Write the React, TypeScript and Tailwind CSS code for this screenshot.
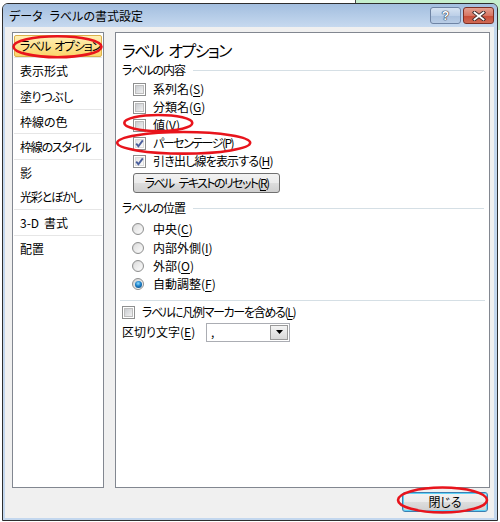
import React from "react";

const U = ({ c }: { c: string }) => (
  <span className="underline decoration-[1px] underline-offset-[2px]">{c}</span>
);

const Sp = () => <span className="inline-block w-[5px]" />;

function Check({ checked = false }: { checked?: boolean }) {
  return (
    <span className="relative flex h-[13px] w-[13px] shrink-0 items-center justify-center border border-[#8e8f8f] bg-white">
      {checked ? (
        <span className="h-[9px] w-[9px] border border-[#dcdcdc] bg-gradient-to-br from-[#e6e6e6] to-[#fbfbfb]" />
      ) : (
        <span className="h-[9px] w-[9px] border border-[#bdbdbd] bg-gradient-to-br from-[#c9ccd0] to-[#f1f1f1]" />
      )}
      {checked && (
        <svg className="absolute left-0 top-0" width="11" height="11" viewBox="0 0 11 11">
          <path d="M2.2 5.6 L4.4 8.2 L8.8 2.4" fill="none" stroke="#4a5e9c" strokeWidth="1.9" />
        </svg>
      )}
    </span>
  );
}

function Radio({ on = false }: { on?: boolean }) {
  return (
    <span className="flex h-[12px] w-[12px] shrink-0 items-center justify-center rounded-full border border-[#8e8f8f] bg-gradient-to-br from-[#d2d2d2] to-[#f9f9f9]">
      {on ? (
        <span className="h-[7px] w-[7px] rounded-full bg-[radial-gradient(circle_at_45%_35%,#8fdcff_0%,#1a7fc8_45%,#0b3d6e_100%)]" />
      ) : (
        <span className="h-[8px] w-[8px] rounded-full bg-gradient-to-br from-[#dedede] to-[#fafafa]" />
      )}
    </span>
  );
}

function Group({ label }: { label: string }) {
  return (
    <div className="flex h-[18px] items-center">
      <span className="whitespace-nowrap tracking-[-1.1px]">{label}</span>
      <span className="ml-[8px] mr-[5px] h-px flex-1 bg-[#d5dfe5]" />
    </div>
  );
}

const navItems: { key: string; label: React.ReactNode; h: string; sep: boolean; tr: string; selected?: boolean }[] = [
  { key: "a", label: <>ラベル<Sp />オプション</>, h: "h-[25px]", sep: true, tr: "tracking-[-1.2px]", selected: true },
  { key: "b", label: "表示形式", h: "h-[26px]", sep: true, tr: "tracking-normal" },
  { key: "c", label: "塗りつぶし", h: "h-[26px]", sep: true, tr: "tracking-[-0.4px]" },
  { key: "d", label: "枠線の色", h: "h-[24px]", sep: true, tr: "tracking-normal" },
  { key: "e", label: "枠線のスタイル", h: "h-[26px]", sep: true, tr: "tracking-[-1.2px]" },
  { key: "f", label: "影", h: "h-[25px]", sep: false, tr: "tracking-normal" },
  { key: "g", label: "光彩とぼかし", h: "h-[25px]", sep: true, tr: "tracking-[-1.2px]" },
  { key: "h", label: <>3-D<Sp />書式</>, h: "h-[26px]", sep: true, tr: "tracking-normal" },
  { key: "i", label: "配置", h: "h-[25px]", sep: false, tr: "tracking-normal" },
];

export default function App() {
  return (
    <div className="relative h-[522px] w-[500px] overflow-hidden bg-white font-['Noto_Sans_CJK_JP','Noto_Sans',sans-serif] text-[12px] leading-none text-black [font-feature-settings:'palt']">
      {/* background behind window */}
      <div className="absolute right-0 top-0 h-[30px] w-[145px] border-l border-[#4a4a4a] bg-[#c6efce]" />

      {/* window */}
      <div className="relative ml-[2px] mt-[3px] flex h-[518px] w-[496px] flex-col rounded-t-[6px] border border-[#2e2e2e] bg-[#c3d7ee]">
        {/* title bar */}
        <div className="flex h-[23px] items-start rounded-t-[5px] bg-gradient-to-b from-[#a3bedf] to-[#c6d9ef]">
          <div className="flex h-[23px] flex-1 items-center whitespace-nowrap pl-[6px]">
            データ<span className="inline-block w-[7px]" />ラベルの書式設定
          </div>
          <div className="mr-[3px] mt-[3px] flex gap-[2px]">
            <div className="flex h-[17px] w-[31px] items-center justify-center rounded-[3px] border border-[#6f84a4] bg-[linear-gradient(#d6e3f2_0%,#bdd0e8_50%,#a9c0dd_51%,#b9cde6_100%)] font-['Liberation_Sans',sans-serif] text-[12px] font-bold text-white [text-shadow:0_0_1px_#1e2a40,0_0_1px_#1e2a40,0_0_1px_#1e2a40]">
              ?
            </div>
            <div className="flex h-[17px] w-[31px] items-center justify-center rounded-[3px] border border-[#7c2f24] bg-[linear-gradient(#e4a091_0%,#d77664_50%,#c74a35_51%,#cf6a55_100%)]">
              <svg width="14" height="10" viewBox="0 0 14 10">
                <path d="M2.5 1.5 L11.5 8.5 M11.5 1.5 L2.5 8.5" stroke="#3a2a2a" strokeWidth="3.6" strokeLinecap="square" />
                <path d="M2.5 1.5 L11.5 8.5 M11.5 1.5 L2.5 8.5" stroke="#ffffff" strokeWidth="1.8" strokeLinecap="square" />
              </svg>
            </div>
          </div>
        </div>

        {/* client area */}
        <div className="ml-[2px] mr-[3px] flex h-[491px] w-[489px] flex-col bg-[#f0f0f0]">
          <div className="mt-[5px] ml-[7px] flex h-[456px] gap-[11px]">
            {/* left nav */}
            <div className="flex h-[456px] w-[92px] flex-col border border-[#828790] bg-white">
              {navItems.map((it) => (
                <div key={it.key} className={`flex flex-col ${it.h}`}>
                  {it.selected ? (
                    <div className="flex flex-1 flex-col pt-[2px]">
                      <div className={`mx-[1px] flex h-[22px] items-center whitespace-nowrap rounded-[2px] border border-[#dcb04c] bg-gradient-to-b from-[#fff0b4] to-[#fbd56a] pl-[5px] ${it.tr}`}>
                        {it.label}
                      </div>
                    </div>
                  ) : (
                    <div className={`flex flex-1 items-center whitespace-nowrap pl-[7px] ${it.tr}`}>{it.label}</div>
                  )}
                  {it.sep && <div className="mx-[1px] h-px bg-[#e6e6e6]" />}
                </div>
              ))}
            </div>

            {/* right panel */}
            <div className="flex h-[456px] w-[375px] flex-col whitespace-nowrap border border-[#828790] bg-white pl-[6px] pt-[6px]">
              <div className="flex h-[22px] items-center text-[16px] tracking-[-1.6px]">
                ラベル<span className="inline-block w-[6px]" />オプション
              </div>
              <Group label="ラベルの内容" />
              <div className="mt-[1px] flex flex-col pl-[11px]">
                <div className="flex h-[18px] items-center gap-[7px]">
                  <Check />
                  <span>系列名(<U c="S" />)</span>
                </div>
                <div className="flex h-[18px] items-center gap-[7px]">
                  <Check />
                  <span>分類名(<U c="G" />)</span>
                </div>
                <div className="flex h-[18px] items-center gap-[7px]">
                  <Check />
                  <span>値(<U c="V" />)</span>
                </div>
                <div className="flex h-[18px] items-center gap-[7px]">
                  <Check checked />
                  <span className="tracking-[-1.5px]">パーセンテージ(<U c="P" />)</span>
                </div>
                <div className="flex h-[18px] items-center gap-[7px]">
                  <Check checked />
                  <span className="tracking-[-0.8px]">引き出し線を表示する(<U c="H" />)</span>
                </div>
                <div className="mt-[3px] flex h-[20px] w-[147px] items-center justify-center rounded-[3px] border border-[#707070] bg-[linear-gradient(#f2f2f2_0%,#ebebeb_50%,#dddddd_51%,#cfcfcf_100%)] tracking-[-1.6px]">
                  ラベル<Sp />テキストのリセット(<U c="R" />)
                </div>
              </div>
              <div className="mt-[6px]">
                <Group label="ラベルの位置" />
              </div>
              <div className="mt-[3px] flex flex-col pl-[10px]">
                <div className="flex h-[18px] items-center gap-[9px]">
                  <Radio />
                  <span>中央(<U c="C" />)</span>
                </div>
                <div className="flex h-[19px] items-center gap-[9px]">
                  <Radio />
                  <span>内部外側(<U c="I" />)</span>
                </div>
                <div className="flex h-[18px] items-center gap-[9px]">
                  <Radio />
                  <span>外部(<U c="O" />)</span>
                </div>
                <div className="flex h-[18px] items-center gap-[9px]">
                  <Radio on />
                  <span>自動調整(<U c="F" />)</span>
                </div>
              </div>
              <div className="-ml-[2px] mr-[4px] mt-[7px] h-px bg-[#d5dfe5]" />
              <div className="mt-[2px] flex h-[18px] items-center gap-[7px]">
                <Check />
                <span className="tracking-[-1.3px]">ラベルに凡例マーカーを含める(<U c="L" />)</span>
              </div>
              <div className="mt-[1px] flex h-[20px] items-center">
                <span className="w-[84px]">区切り文字(<U c="E" />)</span>
                <div className="flex h-[19px] w-[84px] items-center border border-[#abadb3] bg-white">
                  <span className="flex-1 pl-[4px]">,</span>
                  <div className="mr-[1px] flex h-[15px] w-[18px] items-center justify-center border border-[#9a9a9a] bg-gradient-to-b from-[#f4f4f4] to-[#d9d9d9]">
                    <svg width="7" height="4" viewBox="0 0 7 4">
                      <path d="M0 0 L7 0 L3.5 4 Z" fill="#000" />
                    </svg>
                  </div>
                </div>
              </div>
            </div>
          </div>

          {/* bottom buttons */}
          <div className="mt-[4px] flex justify-end pr-[6px]">
            <div className="flex h-[20px] w-[86px] items-center justify-center rounded-[3px] border border-[#3c7fb1] bg-[linear-gradient(#f2f2f2_0%,#ebebeb_50%,#dddddd_51%,#cfcfcf_100%)] shadow-[inset_0_0_0_1px_#5fd2f7]">
              閉じる
            </div>
          </div>
        </div>
      </div>

      {/* red annotation ellipses */}
      <svg className="pointer-events-none absolute left-0 top-0" width="500" height="522" viewBox="0 0 500 522">
        <g fill="none" stroke="#e8141c" strokeWidth="2.6">
          <ellipse cx="57.5" cy="46.7" rx="44" ry="10.5" />
          <ellipse cx="158.3" cy="123" rx="34" ry="8" />
          <ellipse cx="183.7" cy="142.8" rx="66.5" ry="10.8" />
          <ellipse cx="442.5" cy="500" rx="44.5" ry="12.5" />
        </g>
      </svg>
    </div>
  );
}
